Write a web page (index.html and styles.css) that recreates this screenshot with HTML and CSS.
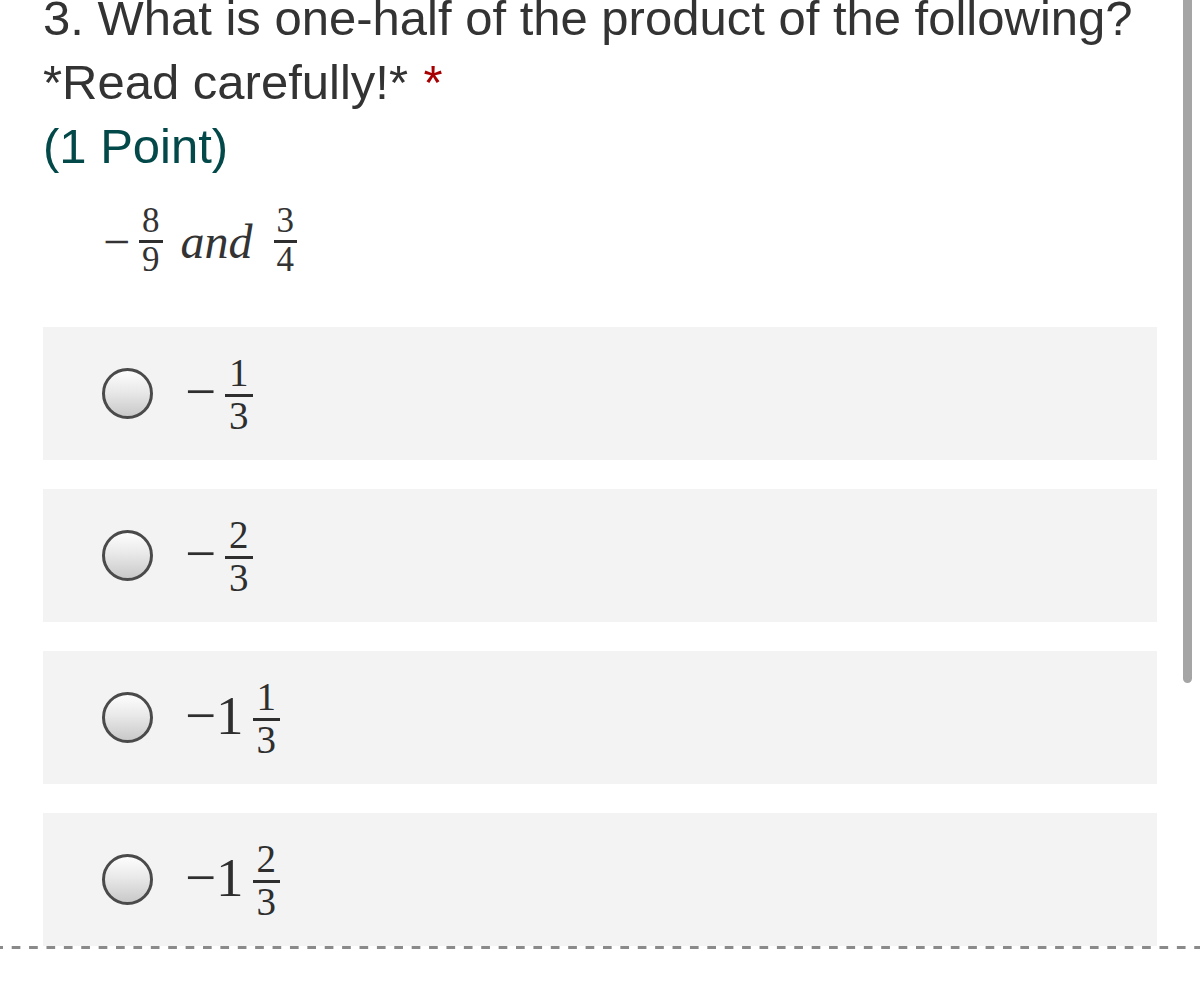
FILE: index.html
```html
<!DOCTYPE html>
<html lang="en">
<head>
<meta charset="utf-8">
<title>Question 3</title>
<link rel="stylesheet" href="styles.css">
</head>
<body>
<div class="page">
  <div class="question">
    <div class="title">
      <span class="qtext">3. What is one-half of the product of the following? *Read carefully!*</span>
      <span class="req">*</span>
    </div>
    <div class="points">(1 Point)</div>
    <div class="formula">
      <span class="minus">&minus;</span><span class="frac frac-sm"><span class="num">8</span><span class="bar"></span><span class="den">9</span></span><span class="word">and</span><span class="frac frac-sm"><span class="num">3</span><span class="bar"></span><span class="den">4</span></span>
    </div>
    <div class="options">
      <div class="option">
        <span class="radio"></span>
        <span class="math"><span class="minus">&minus;</span><span class="frac"><span class="num">1</span><span class="bar"></span><span class="den">3</span></span></span>
      </div>
      <div class="option">
        <span class="radio"></span>
        <span class="math"><span class="minus">&minus;</span><span class="frac"><span class="num">2</span><span class="bar"></span><span class="den">3</span></span></span>
      </div>
      <div class="option">
        <span class="radio"></span>
        <span class="math"><span class="minus">&minus;</span>1<span class="frac"><span class="num">1</span><span class="bar"></span><span class="den">3</span></span></span>
      </div>
      <div class="option">
        <span class="radio"></span>
        <span class="math"><span class="minus">&minus;</span>1<span class="frac"><span class="num">2</span><span class="bar"></span><span class="den">3</span></span></span>
      </div>
    </div>
  </div>
  <div class="dash"></div>
  <div class="scrollbar"></div>
</div>
</body>
</html>
```

FILE: styles.css
```css
html, body {
  margin: 0;
  padding: 0;
  background: #ffffff;
}

.page {
  position: relative;
  width: 1200px;
  height: 995px;
  overflow: hidden;
}

.question {
  padding: 0 43px 0 43px;
}

.title {
  margin-top: -14px;
  font-family: "Liberation Sans", Arial, Helvetica, sans-serif;
  font-size: 49px;
  line-height: 64px;
  color: #333333;
}

.req {
  color: #a80000;
  margin-left: 2px;
}

.points {
  font-family: "Liberation Sans", Arial, Helvetica, sans-serif;
  font-size: 49px;
  line-height: 64px;
  color: #04494a;
}

.formula {
  margin-top: 25px;
  padding-left: 60px;
  font-family: "Liberation Serif", "Times New Roman", serif;
  font-size: 48px;
  line-height: 60px;
  color: #333333;
}

.formula .word {
  font-style: italic;
  margin: 0 12px 0 18px;
}

.frac {
  display: inline-flex;
  flex-direction: column;
  align-items: stretch;
  text-align: center;
  font-size: 39px;
  margin-left: 9px;
  vertical-align: 24px;
}

.frac .num,
.frac .den {
  line-height: 1;
  padding: 0 4px;
}

.frac .bar {
  height: 3px;
  margin-top: 2px;
  margin-bottom: -1px;
  background: #2e2e2e;
}

.frac-sm {
  font-size: 35px;
  vertical-align: 26px;
}

.frac-sm .num,
.frac-sm .den {
  padding: 0 3px;
}

.options {
  margin-top: 50px;
  display: flex;
  flex-direction: column;
  gap: 29px;
}

.option {
  height: 133px;
  background: #f3f3f3;
  display: flex;
  align-items: center;
  padding-left: 59px;
}

.radio {
  flex: none;
  width: 45px;
  height: 45px;
  border: 3px solid #4a4a4a;
  border-radius: 50%;
  background: linear-gradient(to bottom, #fdfdfd 0%, #e9e9e9 45%, #c9c9c9 100%);
}

.math {
  margin-left: 32px;
  font-family: "Liberation Serif", "Times New Roman", serif;
  font-size: 55px;
  color: #2e2e2e;
}

.dash {
  height: 3px;
  background-image: linear-gradient(to right, #8a8a8a 9px, transparent 9px);
  background-size: 17.4px 3px;
  background-position: 11.7px 0;
  background-repeat: repeat-x;
}

.scrollbar {
  position: absolute;
  top: -10px;
  left: 1183px;
  width: 9px;
  height: 693px;
  border-radius: 5px;
  background: #a5a5a5;
}
```
